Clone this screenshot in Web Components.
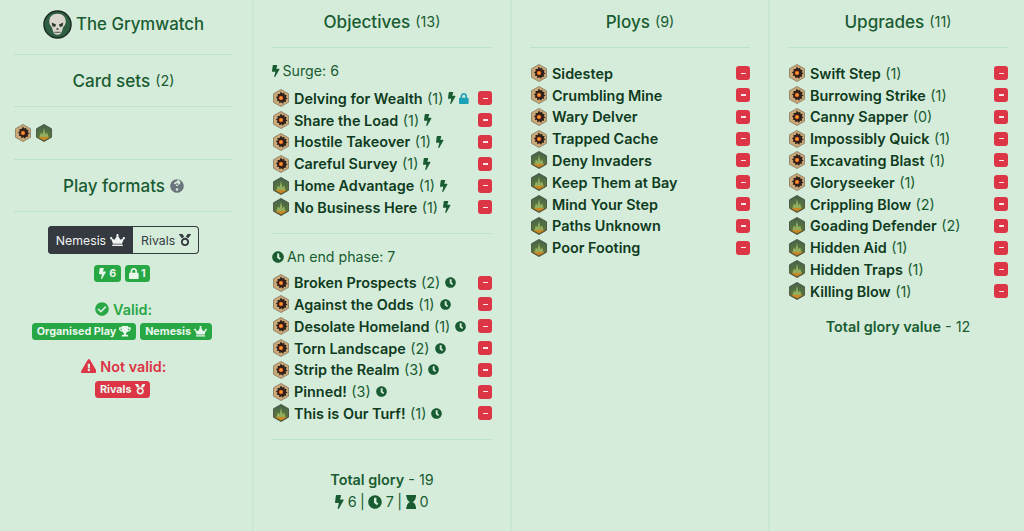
<!DOCTYPE html>
<html>
<head>
<meta charset="utf-8">
<title>The Grymwatch</title>
<style>
  html, body { margin:0; padding:0; height:100%; overflow:hidden; }
  body { background:#d5ecdb; color:#14532d; font-family:Inter, "Liberation Sans", sans-serif; }
  deck-page { height:531px; }
</style>
</head>
<body>
<deck-page>
  <deck-column style="--pad-l:14px;--pad-r:19px">
    <faction-title slot="head">The Grymwatch</faction-title>
    <section-rule></section-rule>
    <section-title count="2" style="--title-h:51px">Card sets</section-title>
    <section-rule></section-rule>
    <div style="display:flex;gap:3px;height:52px;align-items:center;padding-bottom:1px;box-sizing:border-box">
      <set-icon kind="gear" size="18"></set-icon><set-icon kind="green" size="18"></set-icon>
    </div>
    <section-rule></section-rule>
    <section-title help style="--title-h:51px">Play formats</section-title>
    <section-rule></section-rule>
    <format-panel></format-panel>
  </deck-column>

  <deck-column>
    <section-title count="13" style="--title-h:47px;--title-pb:4px">Objectives</section-title>
    <section-rule></section-rule>
    <group-label icon="bolt" style="--label-top:12.500px;--label-bottom:7px">Surge: 6</group-label>
    <card-list id="surge"></card-list>
    <section-rule style="--rule-top:14.500px"></section-rule>
    <group-label icon="clock" style="--label-top:13px;--label-bottom:5px">An end phase: 7</group-label>
    <card-list id="end"></card-list>
    <section-rule style="--rule-top:15px"></section-rule>
    <glory-total></glory-total>
  </deck-column>

  <deck-column>
    <section-title count="9" style="--title-h:47px;--title-pb:4px">Ploys</section-title>
    <section-rule></section-rule>
    <card-list id="ploys" style="--list-top:14.400px"></card-list>
  </deck-column>

  <deck-column style="--pad-r:16px;border:0">
    <section-title count="11" style="--title-h:47px;--title-pb:4px">Upgrades</section-title>
    <section-rule></section-rule>
    <card-list id="upgrades" style="--list-top:14.400px"></card-list>
    <div style="text-align:center;margin-top:15px;font-size:14.400px;line-height:20px;color:#1a5c32"><b style="font-weight:600">Total glory value</b> - 12</div>
  </deck-column>
</deck-page>

<script>
const ICONS = {
  bolt: ['0 0 320 512', '<path d="M296 160H180.600l42.600-129.800C227.200 15 215.700 0 200 0H56C44 0 33.800 8.900 32.200 20.800l-32 240C-1.700 275.200 9.500 288 24 288h118.700L96.600 482.500c-3.600 15.200 8 29.500 23.300 29.500 8.400 0 16.400-4.400 20.800-12l176-304c9.300-15.900-2.200-36-20.700-36z"/>'],
  clock: ['0 0 512 512', '<path d="M256 8C119 8 8 119 8 256s111 248 248 248 248-111 248-248S393 8 256 8zm57 350l-88-64c-3-2.300-5-6-5-10V116c0-6.600 5.400-12 12-12h64c6.600 0 12 5.400 12 12v138l63 46c5.400 3.900 6.500 11.400 2.600 16.800l-37.600 51.800c-3.900 5.300-11.400 6.500-16.800 2.400z"/>'],
  hourglass: ['0 0 384 512', '<path d="M360 64c13.300 0 24-10.700 24-24V24c0-13.300-10.700-24-24-24H24C10.700 0 0 10.700 0 24v16c0 13.300 10.700 24 24 24 0 91 51 167.800 120.800 192C75 280.200 24 357 24 448c-13.300 0-24 10.700-24 24v16c0 13.300 10.700 24 24 24h336c13.300 0 24-10.700 24-24v-16c0-13.300-10.700-24-24-24 0-91-51-167.800-120.800-192C309 231.800 360 155 360 64z"/>'],
  lock: ['0 0 448 512', '<path d="M400 224h-24v-72C376 68.200 307.800 0 224 0S72 68.200 72 152v72H48c-26.500 0-48 21.500-48 48v192c0 26.500 21.500 48 48 48h352c26.500 0 48-21.500 48-48V272c0-26.500-21.500-48-48-48zm-104 0H152v-72c0-39.700 32.300-72 72-72s72 32.300 72 72v72z"/>'],
  crown: ['0 0 640 512', '<path d="M528 448H112c-8.800 0-16 7.200-16 16v32c0 8.800 7.200 16 16 16h416c8.800 0 16-7.200 16-16v-32c0-8.800-7.200-16-16-16zm64-320c-26.500 0-48 21.500-48 48 0 7.100 1.600 13.700 4.400 19.800L476 239.200c-15.400 9.200-35.300 4-44.200-11.600L350.300 85C361 76.200 368 63 368 48c0-26.500-21.500-48-48-48s-48 21.500-48 48c0 15 7 28.200 17.700 37l-81.500 142.600c-8.900 15.600-28.900 20.800-44.200 11.600l-72.300-43.400c2.700-6 4.400-12.700 4.400-19.800 0-26.500-21.500-48-48-48S0 149.500 0 176s21.500 48 48 48c2.600 0 5.200-.4 7.700-.8L128 416h384l72.300-192.800c2.500.4 5.100.8 7.700.8 26.500 0 48-21.500 48-48s-21.500-48-48-48z"/>'],
  medal: ['0 0 512 512', '<path d="M223.800 130.800L154.100 14.600C148.400 5.500 138.200 0 127.600 0H16C3 0-4.600 14.700 3 25.300l111.700 159.500c29.800-27.900 67.500-47 109.100-54zM496 0H384.400c-10.600 0-20.800 5.500-26.500 14.600L288.200 130.800c41.600 7 79.300 26.100 109.100 54L509 25.300C516.600 14.700 509 0 496 0zM256 160c-97.200 0-176 78.800-176 176s78.800 176 176 176 176-78.800 176-176-78.800-176-176-176zm0 272c-53 0-96-43-96-96s43-96 96-96 96 43 96 96-43 96-96 96z"/>'],
  trophy: ['0 0 576 512', '<path d="M552 64H448V24c0-13.300-10.700-24-24-24H152c-13.300 0-24 10.700-24 24v40H24C10.700 64 0 74.700 0 88v56c0 35.700 22.500 72.400 61.900 100.700 31.500 22.700 69.800 37.100 110 41.700C203.300 338.500 240 360 240 360v72h-48c-35.300 0-64 20.700-64 56v12c0 6.600 5.400 12 12 12h296c6.600 0 12-5.400 12-12v-12c0-35.300-28.700-56-64-56h-48v-72s36.700-21.500 68.100-73.600c40.300-4.600 78.600-19 110-41.700 39.300-28.300 61.900-65 61.900-100.700V88c0-13.300-10.700-24-24-24zM99.300 192.800C74.900 175.200 64 155.600 64 144v-16h64.200c1 32.600 5.800 61.200 12.800 86.200-15.100-5.200-29.200-12.400-41.700-21.400zM512 144c0 16.100-17.700 36.100-35.300 48.800-12.500 9-26.700 16.200-41.800 21.400 7-25 11.800-53.600 12.800-86.200H512v16z"/>'],
  check: ['0 0 512 512', '<path d="M504 256c0 137-111 248-248 248S8 393 8 256 119 8 256 8s248 111 248 248zM227.300 387.300l184-184c6.200-6.200 6.200-16.400 0-22.600l-22.600-22.600c-6.200-6.200-16.400-6.200-22.600 0L216 308.100l-70.100-70.100c-6.200-6.200-16.400-6.200-22.600 0l-22.600 22.600c-6.200 6.200-6.200 16.400 0 22.600l104 104c6.200 6.300 16.400 6.300 22.600.1z"/>'],
  warning: ['0 0 576 512', '<path d="M569.500 440C588 472 564.800 512 527.900 512H48.100c-36.900 0-60-40.100-41.600-72L246.400 24c18.500-32 64.700-32 83.200 0l239.900 416zM288 354c-25.400 0-46 20.600-46 46s20.600 46 46 46 46-20.600 46-46-20.600-46-46-46zm-43.700-165.300l7.400 136c.3 6.400 5.600 11.300 12 11.300h48.500c6.400 0 11.600-5 12-11.300l7.400-136c.4-6.900-5.100-12.700-12-12.700h-63.400c-6.900 0-12.400 5.800-12 12.700z"/>'],
  help: ['0 0 512 512', '<path d="M504 256c0 137-111 248-248 248S8 393 8 256C8 119.100 119 8 256 8s248 111 248 248zM262.700 90c-54.500 0-89.300 23-116.500 63.800-3.500 5.300-2.400 12.400 2.700 16.300l34.700 26.300c5.200 3.900 12.600 3 16.700-2.100 17.900-22.700 30.100-35.800 57.300-35.800 20.400 0 45.700 13.100 45.700 33 0 15-12.400 22.700-32.600 34C247.100 178.700 216 195 216 236v4c0 6.600 5.400 12 12 12h56c6.600 0 12-5.400 12-12v-1.300c0-28.400 83-29.600 83-106.700 0-58-60.200-102-116.300-102zM256 338c-25.400 0-46 20.600-46 46 0 25.400 20.600 46 46 46s46-20.600 46-46c0-25.400-20.600-46-46-46z"/>']
};

// small helper so the icon markup isn't repeated everywhere
function icon(name, h, color) {
  const [box, body] = ICONS[name];
  const [,, w, ht] = box.split(' ').map(Number);
  return `<svg xmlns="http://www.w3.org/2000/svg" viewBox="${box}" height="${h}" width="${h * w / ht}" fill="${color || 'currentColor'}" style="display:inline-block;flex:none">${body}</svg>`;
}

let setIconId = 0;
class SetIcon extends HTMLElement {
  connectedCallback() {
    const size = parseInt(this.getAttribute('size')) || 18;
    const gear = this.getAttribute('kind') === 'gear';
    const id = 'set' + (++setIconId);
    const hex = 'M12 .6 22 6.300V17.700L12 23.400 2 17.700V6.300Z';
    const art = gear
      ? `<defs><radialGradient id="${id}"><stop offset="0" stop-color="#ffc83a"/><stop offset="1" stop-color="#d9431b"/></radialGradient></defs>
         <path d="${hex}" fill="#cba877" stroke="#6d5a44" stroke-width=".8"/>
         <path d="M12 3.800l1.500 2.500 2.800-1 .3 2.900 2.900.3-1 2.800 2.300 1.700-2.500 1.500.6 2.900-2.900-.1-1.300 2.600-2.200-1.900-2.600 1.400-.6-2.900-2.900-.3.900-2.800-2.200-1.900 2.600-1.400-.4-2.900 2.900 0 1.300-2.800z" fill="#2e201a" transform="translate(0 -.4)"/>
         <circle cx="12" cy="12" r="3" fill="url(#${id})"/>`
      : `<defs><linearGradient id="${id}" x1="0" y1="0" x2="0" y2="1"><stop offset="0" stop-color="#47624a"/><stop offset=".6" stop-color="#56743f"/><stop offset="1" stop-color="#7d5f20"/></linearGradient></defs>
         <path d="${hex}" fill="url(#${id})" stroke="#3c3f33" stroke-width="1"/>
         <path d="M6 17l2-6 2 3 2-9 2 9 2-3 2 6-6 3z" fill="#a3bd68" opacity=".8"/>
         <path d="M5 18c2-1 3.500-.5 5-1l2 .8 2-.8c1.500.5 3 0 5 1l-7 3.800z" fill="#c98a26"/>`;
    this.attachShadow({mode:'open'}).innerHTML = `
      <style>:host { display:inline-flex; flex:none; width:${size}px; height:${size}px; }</style>
      <svg xmlns="http://www.w3.org/2000/svg" viewBox="0 0 24 24" width="${size}" height="${size}">${art}</svg>`;
  }
}
customElements.define('set-icon', SetIcon);

class DeckPage extends HTMLElement {
  constructor() {
    super();
    this.attachShadow({mode:'open'}).innerHTML = `
      <style>:host { display:grid; grid-template-columns:254px 258px 258px 254px; }</style>
      <slot></slot>`;
  }
}
customElements.define('deck-page', DeckPage);

class DeckColumn extends HTMLElement {
  constructor() {
    super();
    this.attachShadow({mode:'open'}).innerHTML = `
      <style>
        :host { display:block; box-sizing:border-box; height:531px; padding:0 var(--pad-r,18px) 0 var(--pad-l,18px); border-right:2px solid #c8e8d1; }
      </style>
      <slot name="head"></slot><slot></slot>`;
  }
}
customElements.define('deck-column', DeckColumn);

class FactionTitle extends HTMLElement {
  constructor() {
    super();
    this.attachShadow({mode:'open'}).innerHTML = `
      <style>
        :host { display:flex; align-items:center; justify-content:center; gap:4px; height:54px; padding-bottom:6px; box-sizing:border-box; font-size:16.800px; font-weight:500; color:#1a5c32; white-space:nowrap; }
      </style>
      <svg xmlns="http://www.w3.org/2000/svg" viewBox="0 0 30 30" width="29" height="29">
        <circle cx="15" cy="15" r="14" fill="#2f5f43" stroke="#1d2a22" stroke-width="1.500"/>
        <path d="M15 4c5.500 0 8.500 3.400 8.500 8 0 3-1.500 4.800-2.800 6-.5 1.400-.6 3-1.300 4.500-1 1.900-1.800 3-4.400 3s-3.400-1.100-4.400-3c-.7-1.500-.8-3.100-1.300-4.500-1.300-1.200-2.800-3-2.800-6 0-4.600 3-8 8.500-8z" fill="#dad6cc"/>
        <path d="M9 13l4.500 2-1 2.500-2.800-.8zM21 13l-4.500 2 1 2.500 2.800-.8z" fill="#2b3a30"/>
        <path d="M14.300 18.500h1.400l.6 2h-2.600zM12 22.500h6v1h-6z" fill="#3a4a3e"/>
      </svg>
      <span><slot></slot></span>`;
  }
}
customElements.define('faction-title', FactionTitle);

class SectionTitle extends HTMLElement {
  constructor() {
    super();
    this.attachShadow({mode:'open'}).innerHTML = `
      <style>
        :host { display:flex; align-items:center; justify-content:center; gap:5px; height:var(--title-h,52px); padding-bottom:var(--title-pb,0); box-sizing:border-box; font-size:17.100px; font-weight:500; color:#1a5c32; white-space:nowrap; }
        .n { font-size:14.400px; font-weight:400; }
        .n:empty, .q:empty { display:none; }
        .q { color:#6c757d; display:inline-flex; }
      </style>
      <span><slot></slot></span><span class="n"></span><span class="q"></span>`;
  }
  connectedCallback() {
    if (this.hasAttribute('count')) this.shadowRoot.querySelector('.n').textContent = `(${this.getAttribute('count')})`;
    if (this.hasAttribute('help')) this.shadowRoot.querySelector('.q').innerHTML = icon('help', 14);
  }
}
customElements.define('section-title', SectionTitle);

class SectionRule extends HTMLElement {
  constructor() {
    super();
    this.attachShadow({mode:'open'}).innerHTML = `
      <style>:host { display:block; height:1px; background:#bde3c6; margin-top:var(--rule-top,0); }</style>`;
  }
}
customElements.define('section-rule', SectionRule);

class GroupLabel extends HTMLElement {
  connectedCallback() {
    this.attachShadow({mode:'open'}).innerHTML = `
      <style>
        :host { display:flex; align-items:center; gap:3px; height:20px; margin-top:var(--label-top,14px); margin-bottom:var(--label-bottom,6px); font-size:14.200px; color:#1a5c32; }
      </style>
      ${icon(this.getAttribute('icon'), 12)}<span><slot></slot></span>`;
  }
}
customElements.define('group-label', GroupLabel);

class CardRow extends HTMLElement {
  constructor() {
    super();
    this.attachShadow({mode:'open'}).innerHTML = `
      <style>
        :host { display:flex; align-items:center; height:21.800px; font-size:14.400px; color:#1a5c32; white-space:nowrap; }
        set-icon { margin-right:4px; }
        b { font-weight:600; color:#0f3b20; }
        .n { margin-left:4.500px; }
        .n:empty { display:none; }
        .marks { display:inline-flex; align-items:center; gap:3px; margin-left:5px; }
        button { margin-left:auto; flex:none; width:14px; height:14px; padding:0; border:0; border-radius:3px; background:#dc3545; color:#fff; display:flex; align-items:center; justify-content:center; }
        button i { display:block; width:5px; height:1.500px; background:#fbe4e6; }
      </style>
      <set-icon></set-icon><b></b><span class="n"></span><span class="marks"></span>
      <button aria-label="Remove"><i></i></button>`;
  }
  set card(c) {
    const s = this.shadowRoot;
    const ic = s.querySelector('set-icon');
    ic.setAttribute('kind', c.set);
    ic.setAttribute('size', '18');
    s.querySelector('b').textContent = c.name;
    if (c.n !== undefined) s.querySelector('.n').textContent = `(${c.n})`;
    s.querySelector('.marks').innerHTML = (c.marks || []).map(m =>
      m === 'lock' ? icon('lock', 11, '#1ba2b8') : icon(m, m === 'bolt' ? 12 : 11)).join('');
  }
}
customElements.define('card-row', CardRow);

class CardList extends HTMLElement {
  constructor() {
    super();
    this.attachShadow({mode:'open'}).innerHTML = `
      <style>:host { display:block; margin-top:var(--list-top,0); }</style><slot></slot>`;
  }
  set cards(list) {
    list.forEach(c => {
      const row = document.createElement('card-row');
      row.card = c;
      this.appendChild(row);
    });
  }
}
customElements.define('card-list', CardList);

class FormatPanel extends HTMLElement {
  constructor() {
    super();
    const pill = (bg, inner, extra) => `<span class="pill" style="background:${bg};${extra || ''}">${inner}</span>`;
    this.attachShadow({mode:'open'}).innerHTML = `
      <style>
        :host { display:flex; flex-direction:column; align-items:center; padding-top:14px; }
        .group { display:flex; height:28px; font-size:12.300px; border-radius:4px; overflow:hidden; box-shadow:inset 0 0 0 1px #343a40; }
        .group span { display:flex; align-items:center; gap:4px; padding:0 8px; color:#343a40; }
        .group .on { background:#343a40; color:#f1f3f3; }
        .row { display:flex; justify-content:center; gap:4px; white-space:nowrap; }
        .pill { display:inline-flex; align-items:center; gap:3px; height:17px; padding:0 5px; border-radius:3.500px; font-size:10.800px; font-weight:700; color:#e9f6ec; }
        .head { display:flex; align-items:center; gap:4px; height:20px; font-size:14.400px; font-weight:600; }
      </style>
      <div class="group">
        <span class="on">Nemesis ${icon('crown', 12)}</span>
        <span>Rivals ${icon('medal', 12)}</span>
      </div>
      <div class="row" style="margin-top:11px;margin-left:-3px">
        ${pill('#28a745', icon('bolt', 11) + ' 6')}${pill('#28a745', icon('lock', 11) + ' 1', 'gap:2px;padding:0 4px')}
      </div>
      <div class="head" style="color:#28a745;margin-top:17px">${icon('check', 14)} Valid:</div>
      <div class="row" style="margin-top:4px;margin-left:-3px">
        ${pill('#28a745', 'Organised Play ' + icon('trophy', 10.500))}${pill('#28a745', 'Nemesis ' + icon('crown', 10.500))}
      </div>
      <div class="head" style="color:#dc3545;margin-top:16px">${icon('warning', 14)} Not valid:</div>
      <div class="row" style="margin-top:5px;margin-left:-2px">
        ${pill('#dc3545', 'Rivals ' + icon('medal', 10.500))}
      </div>`;
  }
}
customElements.define('format-panel', FormatPanel);

class GloryTotal extends HTMLElement {
  constructor() {
    super();
    this.attachShadow({mode:'open'}).innerHTML = `
      <style>
        :host { display:block; text-align:center; padding-top:29px; font-size:14.400px; line-height:22px; color:#1a5c32; }
        b { font-weight:600; }
        svg { vertical-align:-2px; }
        .sum { word-spacing:-.6px; }
      </style>
      <div><b>Total glory</b> - 19</div>
      <div class="sum">${icon('bolt', 14)} 6 | ${icon('clock', 14)} 7 | ${icon('hourglass', 14)} 0</div>`;
  }
}
customElements.define('glory-total', GloryTotal);

// deck data
const g = 'gear', v = 'green';
const card = (name, n, set, ...marks) => ({name, n, set, marks});

document.getElementById('surge').cards = [
  card('Delving for Wealth', 1, g, 'bolt', 'lock'),
  card('Share the Load', 1, g, 'bolt'),
  card('Hostile Takeover', 1, g, 'bolt'),
  card('Careful Survey', 1, g, 'bolt'),
  card('Home Advantage', 1, v, 'bolt'),
  card('No Business Here', 1, v, 'bolt')
];
document.getElementById('end').cards = [
  card('Broken Prospects', 2, g, 'clock'),
  card('Against the Odds', 1, g, 'clock'),
  card('Desolate Homeland', 1, g, 'clock'),
  card('Torn Landscape', 2, g, 'clock'),
  card('Strip the Realm', 3, g, 'clock'),
  card('Pinned!', 3, g, 'clock'),
  card('This is Our Turf!', 1, v, 'clock')
];
const ploys = ['Sidestep', 'Crumbling Mine', 'Wary Delver', 'Trapped Cache', 'Deny Invaders', 'Keep Them at Bay', 'Mind Your Step', 'Paths Unknown', 'Poor Footing'];
document.getElementById('ploys').cards = ploys.map((name, i) => ({name, set: i < 4 ? g : v}));
document.getElementById('upgrades').cards = [
  card('Swift Step', 1, g), card('Burrowing Strike', 1, g), card('Canny Sapper', 0, g),
  card('Impossibly Quick', 1, g), card('Excavating Blast', 1, g), card('Gloryseeker', 1, g),
  card('Crippling Blow', 2, v), card('Goading Defender', 2, v), card('Hidden Aid', 1, v),
  card('Hidden Traps', 1, v), card('Killing Blow', 1, v)
];
</script>
</body>
</html>
